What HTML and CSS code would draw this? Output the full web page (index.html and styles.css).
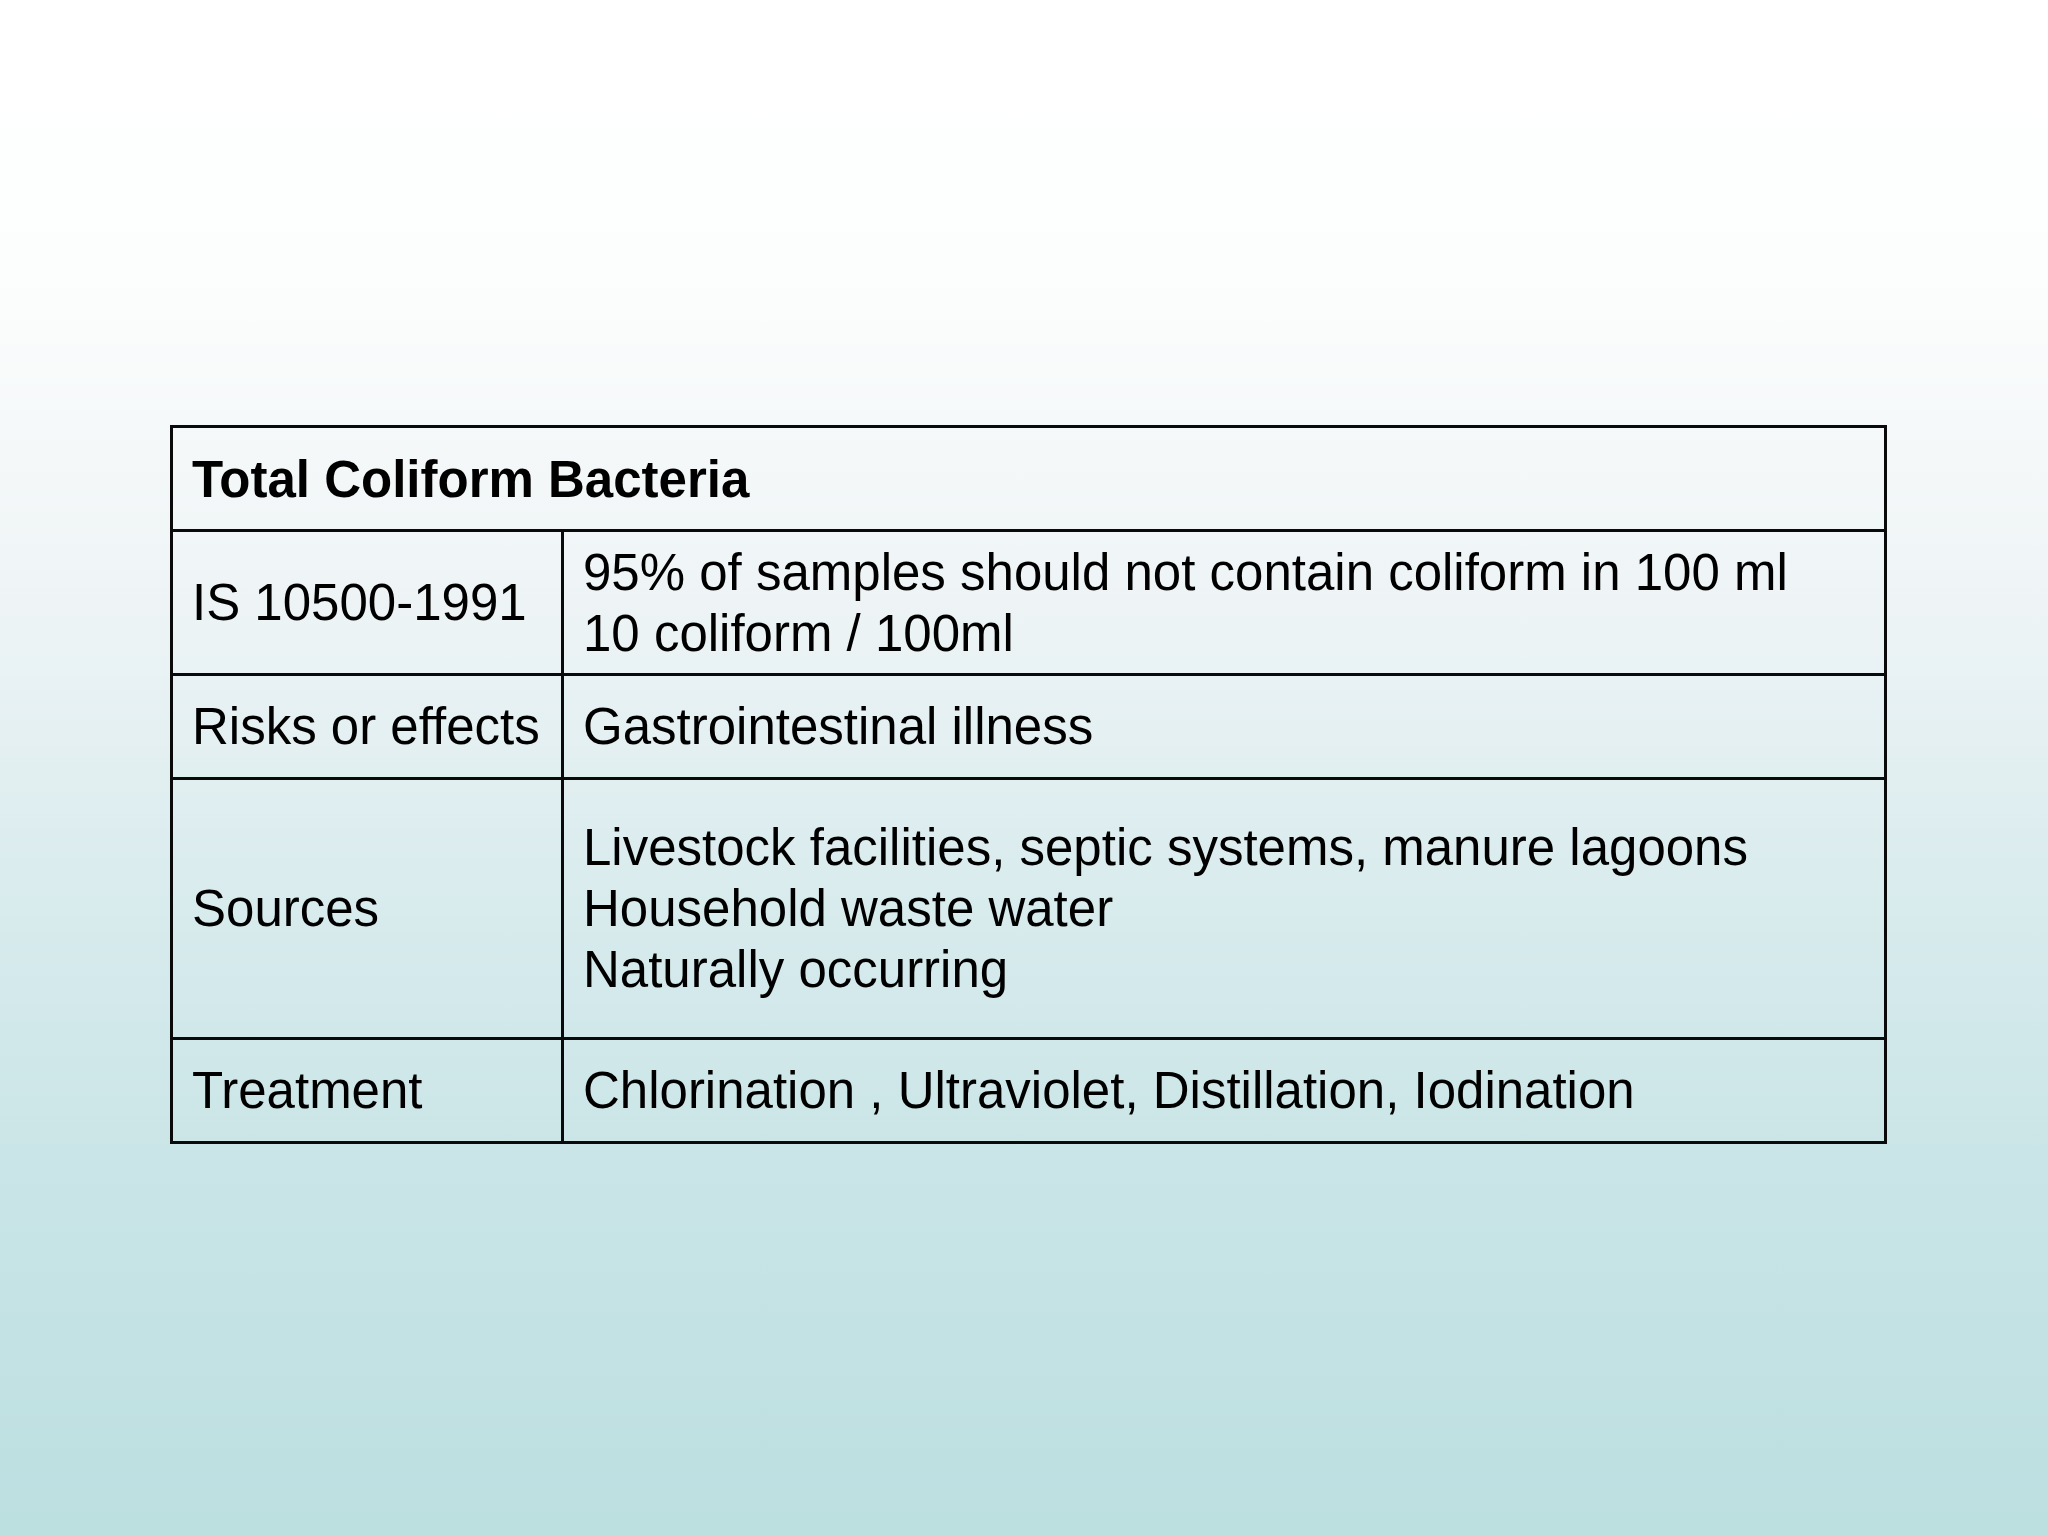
FILE: index.html
```html
<!DOCTYPE html>
<html lang="en">
<head>
<meta charset="utf-8">
<title>Total Coliform Bacteria</title>
<link rel="stylesheet" href="styles.css">
</head>
<body>
<main class="slide">
  <table class="data">
    <colgroup>
      <col class="col-label">
      <col class="col-value">
    </colgroup>
    <tr class="row-head">
      <th colspan="2">Total Coliform Bacteria</th>
    </tr>
    <tr class="row-std">
      <td>IS 10500-1991</td>
      <td>95% of samples should not contain coliform in 100 ml<br>10 coliform / 100ml</td>
    </tr>
    <tr class="row-one">
      <td>Risks or effects</td>
      <td>Gastrointestinal illness</td>
    </tr>
    <tr class="row-sources">
      <td>Sources</td>
      <td>Livestock facilities, septic systems, manure lagoons<br>Household waste water<br>Naturally occurring</td>
    </tr>
    <tr class="row-one">
      <td>Treatment</td>
      <td>Chlorination , Ultraviolet, Distillation, Iodination</td>
    </tr>
  </table>
</main>
</body>
</html>
```

FILE: styles.css
```css
html, body {
  margin: 0;
  padding: 0;
}

body {
  width: 2048px;
  height: 1536px;
  overflow: hidden;
  background: linear-gradient(to bottom,
    #ffffff 0%,
    #fdfefe 13%,
    #fbfcfc 20%,
    #eef4f6 39%,
    #d8ebed 59%,
    #c8e4e6 78%,
    #bcdfe0 100%);
  font-family: "Liberation Sans", Arial, sans-serif;
  color: #000;
}

.slide {
  padding: 425px 0 0 170px;
}

.data {
  border-collapse: collapse;
  table-layout: fixed;
  width: 1714px;
  font-size: 51px;
  line-height: 61px;
}

.col-label {
  width: 391px;
}

.col-value {
  width: 1323px;
}

.data th,
.data td {
  border: 3px solid #0a0a0a;
  padding: 0 0 0 19px;
  text-align: left;
  vertical-align: middle;
  white-space: nowrap;
}

.data th {
  font-weight: bold;
  padding-top: 2px;
}

.row-head {
  height: 104px;
}

.row-std {
  height: 144px;
}

.row-one {
  height: 104px;
}

.row-sources {
  height: 260px;
}
```
